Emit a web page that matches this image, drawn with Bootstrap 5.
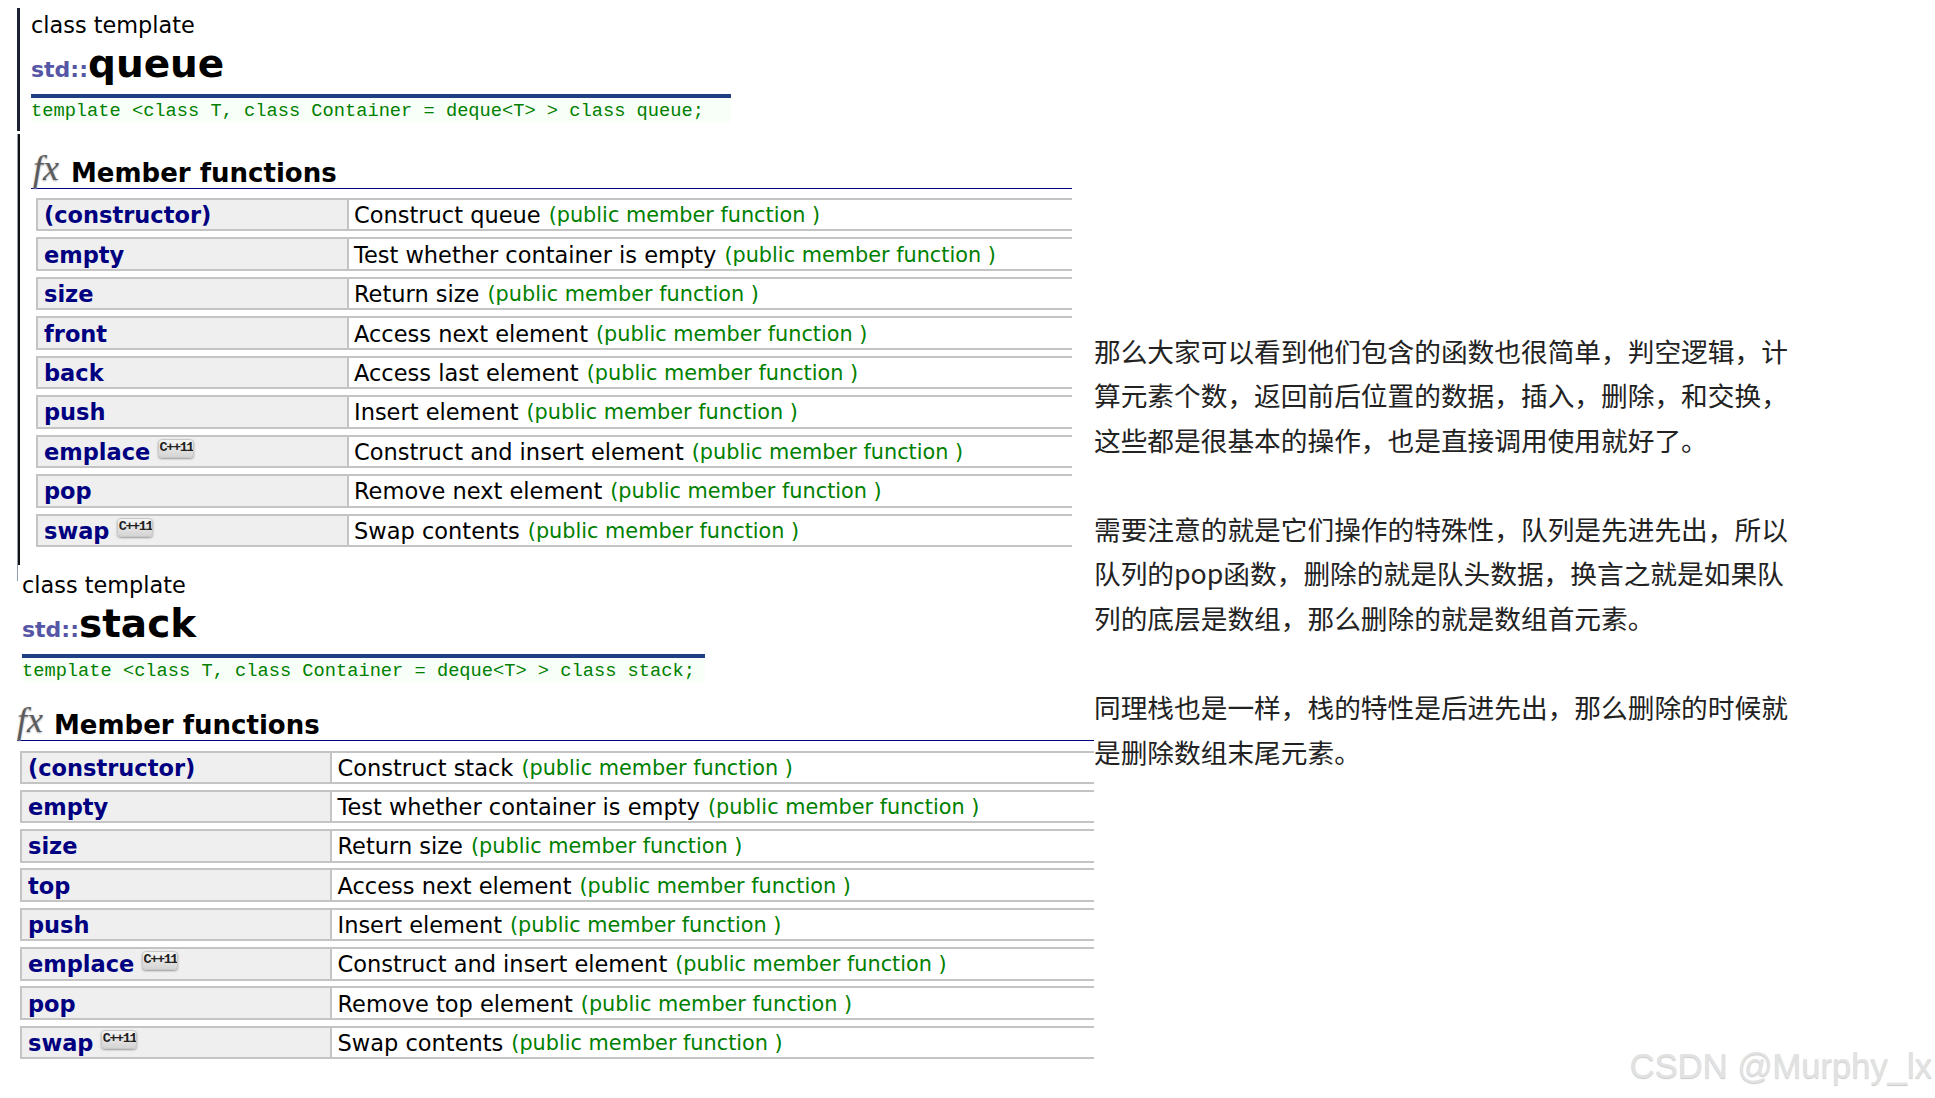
<!doctype html>
<html lang="zh"><head><meta charset="utf-8"><title>queue stack</title>
<link href="https://cdn.jsdelivr.net/npm/bootstrap@5.3.0/dist/css/bootstrap.min.css" rel="stylesheet">
<style>
html,body{height:1098px;overflow:hidden;background:#fff}
body{font-family:"DejaVu Sans",sans-serif;color:#000;position:relative}
.page-left{width:1094px;flex:none}
.q-head{margin:8px 0 0 17px;height:123px;border-left:3px solid #1c2233;padding-left:11px}
.q-body{margin:3px 0 0 17px;height:447px;border-left:1px solid #8d9db8}
.q-body-in{height:431px;border-left:2px solid #111;padding-left:11px;padding-top:17px}
.s-wrap{margin-top:-13px;margin-left:17px}
.s-head{padding-left:5px}
.kind{font-size:22.4px;line-height:28px;padding-top:3px}
.ttl{font-weight:700;font-size:39px;line-height:50px;height:55px;white-space:nowrap}
.ttl small{font-size:22px;color:#5656a6;font-weight:700}
.proto{width:700px;border-top:4px solid #1f3f85;background:#f8fff8;color:#008000;font-family:"Liberation Mono",monospace;font-size:18.7px;line-height:26px;height:28px;white-space:pre}
.s-head .proto{width:683px}
.sect{display:flex;align-items:flex-end;border-bottom:1.5px solid #000080;height:38px;font-weight:700;font-size:26px;line-height:30px;white-space:nowrap}
.q-body .sect{width:1041px}
.s-wrap .sect{width:1077px;margin-top:20.5px}
.fxi{font-family:"Liberation Serif",serif;font-style:italic;font-weight:400;font-size:36px;color:#5c5c5c;width:37px;line-height:34px;text-shadow:0 1px 2px #aaa;align-self:flex-start;margin-top:0}
.q-body .fxi{margin-left:2px;width:38px}
.mlist{padding-top:9px}
.s-wrap .mlist{padding-top:10px;padding-left:3px;width:1077px}
.q-body .mlist{padding-left:5px;width:1041px}
.mrow{display:flex;height:33.45px;margin-bottom:6px;border-top:2px solid #c4c4c4;border-bottom:2px solid #c4c4c4;font-size:22.5px;line-height:30px;white-space:nowrap}
.s-wrap .mrow{margin-bottom:5.9px}
.mname{width:312px;flex:none;background:#efefef;border-left:2px solid #c4c4c4;border-right:2px solid #c4c4c4;padding-left:6px;padding-top:1px;color:#000080;font-weight:700;display:flex;align-items:center;gap:8px}
.q-body .mname{width:312.5px}
.mdesc{padding-left:5.5px;padding-top:1px;display:flex;align-items:center;gap:8px}
.mdesc span{color:#008000;font-size:20.8px}
.cpp{display:inline-block;width:36px;height:19px;margin-top:-7px;border-radius:4px;background:linear-gradient(#f4f4f4,#d4d4d4);border:1px solid #c8c8c8;box-shadow:0 1px 2px #999;font-family:"Liberation Mono",monospace;font-size:13.5px;font-weight:700;line-height:15px;text-align:center;letter-spacing:-1.4px;color:#222;overflow:hidden}
.note{width:700px;padding-top:328.5px;font-family:"Noto Sans CJK SC",sans-serif;font-size:26.7px;line-height:44.6px;color:#222;position:relative;z-index:1}
.note p{margin:0 0 44.6px;background:transparent}
.mark-wm{position:absolute;right:3px;top:1044px;font-family:"Liberation Sans",sans-serif;font-size:34.6px;line-height:44px;color:#e2e2e2;text-shadow:0 1px 1px #c9c9c9;white-space:nowrap}
</style></head>
<body>
<div class="d-flex">
<div class="page-left">
  <div class="q-head">
    <div class="kind">class template</div>
    <div class="ttl"><small>std::</small>queue</div>
    <div class="proto">template &lt;class T, class Container = deque&lt;T&gt; &gt; class queue;</div>
  </div>
  <div class="q-body"><div class="q-body-in">
    <div class="sect"><span class="fxi">fx</span>Member functions</div>
    <div class="mlist">
      <div class="mrow"><div class="mname">(constructor)</div><div class="mdesc">Construct queue <span>(public member function )</span></div></div>
      <div class="mrow"><div class="mname">empty</div><div class="mdesc">Test whether container is empty <span>(public member function )</span></div></div>
      <div class="mrow"><div class="mname">size</div><div class="mdesc">Return size <span>(public member function )</span></div></div>
      <div class="mrow"><div class="mname">front</div><div class="mdesc">Access next element <span>(public member function )</span></div></div>
      <div class="mrow"><div class="mname">back</div><div class="mdesc">Access last element <span>(public member function )</span></div></div>
      <div class="mrow"><div class="mname">push</div><div class="mdesc">Insert element <span>(public member function )</span></div></div>
      <div class="mrow"><div class="mname">emplace <i class="cpp fst-normal">C++11</i></div><div class="mdesc">Construct and insert element <span>(public member function )</span></div></div>
      <div class="mrow"><div class="mname">pop</div><div class="mdesc">Remove next element <span>(public member function )</span></div></div>
      <div class="mrow"><div class="mname">swap <i class="cpp fst-normal">C++11</i></div><div class="mdesc">Swap contents <span>(public member function )</span></div></div>
    </div>
  </div></div>
  <div class="s-wrap">
    <div class="s-head">
      <div class="kind">class template</div>
      <div class="ttl"><small>std::</small>stack</div>
      <div class="proto">template &lt;class T, class Container = deque&lt;T&gt; &gt; class stack;</div>
    </div>
    <div class="sect"><span class="fxi">fx</span>Member functions</div>
    <div class="mlist">
      <div class="mrow"><div class="mname">(constructor)</div><div class="mdesc">Construct stack <span>(public member function )</span></div></div>
      <div class="mrow"><div class="mname">empty</div><div class="mdesc">Test whether container is empty <span>(public member function )</span></div></div>
      <div class="mrow"><div class="mname">size</div><div class="mdesc">Return size <span>(public member function )</span></div></div>
      <div class="mrow"><div class="mname">top</div><div class="mdesc">Access next element <span>(public member function )</span></div></div>
      <div class="mrow"><div class="mname">push</div><div class="mdesc">Insert element <span>(public member function )</span></div></div>
      <div class="mrow"><div class="mname">emplace <i class="cpp fst-normal">C++11</i></div><div class="mdesc">Construct and insert element <span>(public member function )</span></div></div>
      <div class="mrow"><div class="mname">pop</div><div class="mdesc">Remove top element <span>(public member function )</span></div></div>
      <div class="mrow"><div class="mname">swap <i class="cpp fst-normal">C++11</i></div><div class="mdesc">Swap contents <span>(public member function )</span></div></div>
    </div>
  </div>
</div>
<div class="note">
  <p>那么大家可以看到他们包含的函数也很简单，判空逻辑，计算元素个数，返回前后位置的数据，插入，删除，和交换，这些都是很基本的操作，也是直接调用使用就好了。</p>
  <p>需要注意的就是它们操作的特殊性，队列是先进先出，所以队列的pop函数，删除的就是队头数据，换言之就是如果队列的底层是数组，那么删除的就是数组首元素。</p>
  <p>同理栈也是一样，栈的特性是后进先出，那么删除的时候就是删除数组末尾元素。</p>
</div>
</div>
<div class="mark-wm">CSDN @Murphy_lx</div>
<script src="https://cdn.jsdelivr.net/npm/bootstrap@5.3.0/dist/js/bootstrap.bundle.min.js"></script>
</body></html>
